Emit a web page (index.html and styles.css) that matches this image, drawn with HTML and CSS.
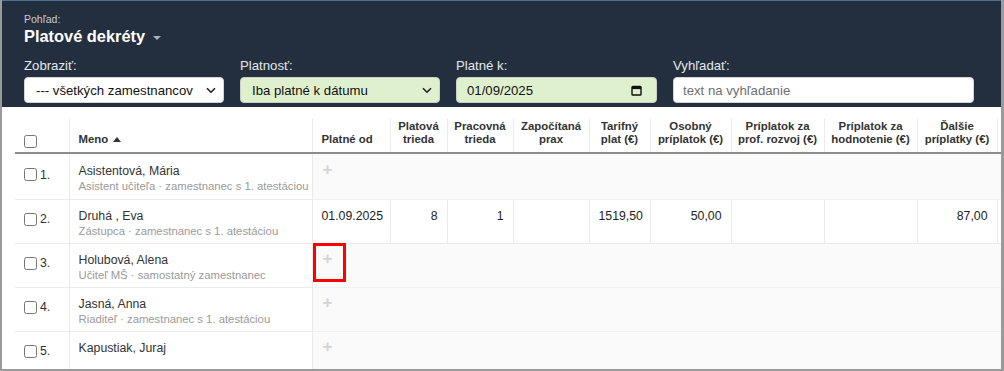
FILE: index.html
```html
<!DOCTYPE html>
<html lang="sk">
<head>
<meta charset="utf-8">
<title>Platové dekréty</title>
<link rel="stylesheet" href="styles.css">
</head>
<body>
<div class="app">
  <header class="topbar">
    <div class="view-label">Pohľad:</div>
    <div class="view-title">Platové dekréty <span class="caret"></span></div>
    <div class="filters">
      <label class="filter w200">
        <span class="flabel">Zobraziť:</span>
        <span class="control white">
          <select><option>--- všetkých zamestnancov</option></select>
          <svg class="chev" width="10" height="7" viewBox="0 0 10 7"><path d="M1 1.2 5 5.2 9 1.2" fill="none" stroke="#222" stroke-width="1.6"/></svg>
        </span>
      </label>
      <label class="filter w200">
        <span class="flabel">Platnosť:</span>
        <span class="control green">
          <select><option>Iba platné k dátumu</option></select>
          <svg class="chev" width="10" height="7" viewBox="0 0 10 7"><path d="M1 1.2 5 5.2 9 1.2" fill="none" stroke="#222" stroke-width="1.6"/></svg>
        </span>
      </label>
      <label class="filter w201">
        <span class="flabel">Platné k:</span>
        <span class="control green date">
          <span class="dval">01/09/2025</span>
          <svg class="cal" width="11" height="11" viewBox="0 0 11 11"><rect x="1" y="1.5" width="9" height="8.5" rx="0.8" fill="none" stroke="#111" stroke-width="1.4"/><rect x="1" y="1.5" width="9" height="2.6" fill="#111"/></svg>
        </span>
      </label>
      <label class="filter w301">
        <span class="flabel">Vyhľadať:</span>
        <span class="control white">
          <input type="text" placeholder="text na vyhľadanie">
        </span>
      </label>
    </div>
  </header>

  <div class="table-wrap">
    <table class="grid">
      <colgroup>
        <col style="width:54px"><col style="width:243px"><col style="width:78px"><col style="width:57px"><col style="width:66px"><col style="width:76px"><col style="width:61px"><col style="width:81px"><col style="width:93px"><col style="width:93px"><col style="width:80px"><col style="width:80px">
      </colgroup>
      <thead>
        <tr>
          <th class="c-chk"><input type="checkbox"></th>
          <th class="left">Meno <span class="sort"></span></th>
          <th class="left">Platné od</th>
          <th>Platová<br>trieda</th>
          <th>Pracovná<br>trieda</th>
          <th>Započítaná<br>prax</th>
          <th>Tarifný<br>plat (€)</th>
          <th>Osobný<br>príplatok (€)</th>
          <th>Príplatok za<br>prof. rozvoj (€)</th>
          <th>Príplatok za<br>hodnotenie (€)</th>
          <th>Ďalšie<br>príplatky (€)</th>
          <th></th>
        </tr>
      </thead>
      <tbody>
        <tr class="first">
          <td class="c-chk"><input type="checkbox"><span class="num">1.</span></td>
          <td class="c-name"><div class="nm">Asistentová, Mária</div><div class="sub">Asistent učiteľa · zamestnanec s 1. atestáciou</div></td>
          <td class="empty" colspan="10"><span class="plus">+</span></td>
        </tr>
        <tr>
          <td class="c-chk"><input type="checkbox"><span class="num">2.</span></td>
          <td class="c-name"><div class="nm">Druhá , Eva</div><div class="sub">Zástupca · zamestnanec s 1. atestáciou</div></td>
          <td class="val">01.09.2025</td>
          <td class="val r">8</td>
          <td class="val r">1</td>
          <td class="val r"></td>
          <td class="val r">1519,50</td>
          <td class="val r">50,00</td>
          <td class="val r"></td>
          <td class="val r"></td>
          <td class="val r">87,00</td>
          <td class="val r"></td>
        </tr>
        <tr>
          <td class="c-chk"><input type="checkbox"><span class="num">3.</span></td>
          <td class="c-name"><div class="nm">Holubová, Alena</div><div class="sub">Učiteľ MŠ · samostatný zamestnanec</div></td>
          <td class="empty" colspan="10"><span class="plus">+</span><span class="mark"></span></td>
        </tr>
        <tr>
          <td class="c-chk"><input type="checkbox"><span class="num">4.</span></td>
          <td class="c-name"><div class="nm">Jasná, Anna</div><div class="sub">Riaditeľ · zamestnanec s 1. atestáciou</div></td>
          <td class="empty" colspan="10"><span class="plus">+</span></td>
        </tr>
        <tr>
          <td class="c-chk"><input type="checkbox"><span class="num">5.</span></td>
          <td class="c-name"><div class="nm">Kapustiak, Juraj</div><div class="sub">&nbsp;</div></td>
          <td class="empty" colspan="10"><span class="plus">+</span></td>
        </tr>
      </tbody>
    </table>
  </div>
</div>
</body>
</html>
```

FILE: styles.css
```css
* { box-sizing: border-box; }
html, body { margin: 0; padding: 0; }
body {
  background: #9a9a9a;
  font-family: "Liberation Sans", Arial, sans-serif;
  color: #333;
  width: 1004px;
  height: 371px;
  overflow: hidden;
}
.app {
  margin: 0 3px 0 2px;
  height: 369px;
  background: #fff;
  border-top: 1px solid #4d6f92;
  overflow: hidden;
}
.topbar {
  background: #232f3e;
  padding: 12px 22px 4px;
  height: 106px;
}
.view-label {
  font-size: 10.5px;
  line-height: 13px;
  color: #c8ccd2;
}
.view-title {
  font-size: 16.4px;
  line-height: 21px;
  font-weight: bold;
  color: #fff;
  display: flex;
  align-items: center;
}
.caret {
  display: inline-block;
  margin-left: 8px;
  margin-top: 2px;
  width: 0; height: 0;
  border-left: 4px solid transparent;
  border-right: 4px solid transparent;
  border-top: 4px solid #a9b0ba;
}
.filters {
  display: flex;
  gap: 16px;
  margin-top: 11px;
}
.filter { display: flex; flex-direction: column; gap: 3px; }
.w200 { width: 200px; }
.w201 { width: 201px; }
.w301 { width: 301px; }
.flabel {
  font-size: 13.2px;
  line-height: 16px;
  color: #e4e7eb;
}
.control {
  position: relative;
  display: flex;
  align-items: center;
  height: 26px;
  border-radius: 4px;
  border: 1px solid #c9d0c4;
}
.control.white { background: #fff; border-color: #d5d5d5; }
.control.green { background: #dff0cf; }
.control select,
.control input {
  appearance: none;
  -webkit-appearance: none;
  border: 0;
  outline: 0;
  background: transparent;
  width: 100%;
  height: 100%;
  font-family: "Liberation Sans", Arial, sans-serif;
  font-size: 13.2px;
  color: #111;
  padding: 0 20px 0 11px;
}
.control input { padding: 0 9px; }
.control input::placeholder { color: #6f6f6f; }
.chev { position: absolute; right: 7px; top: 9px; pointer-events: none; }
.date { justify-content: space-between; padding: 0 14px 0 10px; }
.dval { font-size: 13.2px; color: #111; }
.cal { display: block; }

.table-wrap {
  padding: 11px 0 0 13px;
}
.grid {
  border-collapse: collapse;
  table-layout: fixed;
  width: 968px;
  font-size: 12.3px;
}
.grid th {
  font-size: 11.4px;
  line-height: 13px;
  font-weight: bold;
  color: #333;
  text-align: center;
  vertical-align: bottom;
  padding: 0 4px 6px;
  height: 35px;
  border-left: 1px solid #ececec;
  border-bottom: 2px solid #8c8c8c;
  white-space: nowrap;
}
.grid th:first-child { border-left: 0; }
.grid th.left { text-align: left; padding-left: 9px; }
.grid th.c-chk { text-align: left; padding-left: 9px; padding-bottom: 4px; }
.sort {
  display: inline-block;
  width: 0; height: 0;
  border-left: 4px solid transparent;
  border-right: 4px solid transparent;
  border-bottom: 5px solid #333;
  margin-left: 2px;
  vertical-align: 1px;
}
input[type=checkbox] {
  width: 13px; height: 13px;
  margin: 0;
  vertical-align: middle;
}
.grid td {
  height: 44px;
  border-bottom: 1px solid #ebebeb;
  vertical-align: top;
  padding: 8px 9px 0;
  white-space: nowrap;
}
.grid tr.first td { height: 46px; padding-top: 9px; }
.grid tr.first td.c-chk { padding-top: 13px; }
.grid tr.first td.empty { padding-top: 8px; }
.grid td.c-chk {
  padding: 12px 0 0 9px;
  line-height: 14px;
}
.num { font-size: 12.3px; margin-left: 3px; color: #333; vertical-align: middle; }
.c-name { border-left: 1px solid #ebebeb; }
.nm { font-size: 12.3px; line-height: 16px; color: #333; }
.sub { font-size: 11.3px; line-height: 14px; color: #9a9a9a; }
.val {
  border-left: 1px solid #ebebeb;
  font-size: 12.3px;
  line-height: 16px;
  color: #222;
}
.val.r { text-align: right; }
.grid td.empty {
  background: #fafafa;
  border-left: 1px solid #ebebeb;
  border-bottom-color: #f0f0f0;
  position: relative;
  padding: 7px 0 0 10px;
}
.plus {
  display: inline-block;
  font-size: 17px;
  line-height: 16px;
  font-weight: bold;
  color: #d4d4d4;
}
.mark {
  position: absolute;
  left: 0;
  top: -1px;
  width: 33px;
  height: 39px;
  border: 3px solid #ff0000;
}
```
